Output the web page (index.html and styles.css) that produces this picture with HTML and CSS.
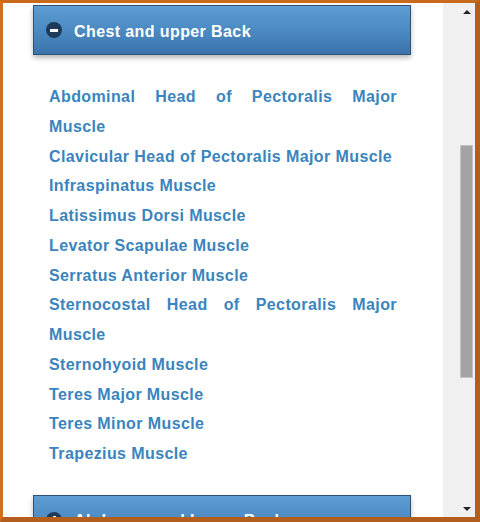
FILE: index.html
```html
<!DOCTYPE html>
<html>
<head>
<meta charset="utf-8">
<link rel="stylesheet" href="styles.css">
</head>
<body>
<div class="frame">
  <div class="content">
    <div class="panel-head">
      <span class="toggle"><span class="bar"></span></span>
      <span class="title">Chest and upper Back</span>
    </div>
    <div class="list">
      <a class="item">Abdominal Head of Pectoralis Major Muscle</a>
      <a class="item">Clavicular Head of Pectoralis Major Muscle</a>
      <a class="item">Infraspinatus Muscle</a>
      <a class="item">Latissimus Dorsi Muscle</a>
      <a class="item">Levator Scapulae Muscle</a>
      <a class="item">Serratus Anterior Muscle</a>
      <a class="item">Sternocostal Head of Pectoralis Major Muscle</a>
      <a class="item">Sternohyoid Muscle</a>
      <a class="item">Teres Major Muscle</a>
      <a class="item">Teres Minor Muscle</a>
      <a class="item">Trapezius Muscle</a>
    </div>
    <div class="panel-head">
      <span class="toggle"><span class="bar"></span><span class="bar vert"></span></span>
      <span class="title">Abdomen and Lower Back</span>
    </div>
  </div>
  <div class="side">
    <div class="gutter"></div>
    <div class="track">
      <div class="btn"><span class="arrow-up"></span></div>
      <div class="thumb"></div>
      <div class="spacer"></div>
      <div class="btn"><span class="arrow-down"></span></div>
    </div>
  </div>
</div>
</body>
</html>
```

FILE: styles.css
```css
html, body {
  margin: 0;
  padding: 0;
  background: #ffffff;
}

.frame {
  width: 480px;
  height: 522px;
  box-sizing: border-box;
  border-style: solid;
  border-width: 3px 5px 5px 3px;
  border-color: #c8691c #b35e1c #b35e1c #d0701f;
  display: flex;
  background: #ffffff;
  overflow: hidden;
}

.content {
  flex: 1;
  overflow: hidden;
  padding: 2px 0 0 30px;
  font-family: "Liberation Sans", Arial, sans-serif;
  font-weight: bold;
  font-size: 16px;
  letter-spacing: 0.4px;
}

.panel-head {
  width: 378px;
  height: 50px;
  box-sizing: border-box;
  border: 1px solid #2e5379;
  background: linear-gradient(to bottom, #5e9dd2 0%, #4d8cc4 45%, #3c74ab 100%);
  box-shadow: 0 3px 5px rgba(0, 0, 0, 0.28);
  display: flex;
  align-items: center;
  padding-left: 12px;
}

.toggle {
  position: relative;
  width: 16px;
  height: 16px;
  border-radius: 50%;
  background: #1d3b5b;
  display: flex;
  align-items: center;
  justify-content: center;
  margin-right: 12px;
  flex: none;
}

.bar {
  width: 8px;
  height: 3px;
  background: #ffffff;
}

.bar.vert {
  position: absolute;
  width: 3px;
  height: 8px;
  left: 6.5px;
  top: 4px;
}

.title {
  color: #ffffff;
  padding-top: 3px;
}

.list {
  width: 378px;
  box-sizing: border-box;
  padding: 27px 14px 26px 16px;
}

.item {
  display: block;
  color: #3b84bd;
  text-align: justify;
  line-height: 29.75px;
}

.side {
  width: 32px;
  display: flex;
  background: #f0f0f0;
}

.gutter {
  width: 16px;
}

.track {
  width: 16px;
  display: flex;
  flex-direction: column;
}

.btn {
  height: 17px;
  display: flex;
  align-items: center;
  justify-content: center;
  flex: none;
}

.arrow-up {
  width: 0;
  height: 0;
  border-left: 4px solid transparent;
  border-right: 4px solid transparent;
  border-bottom: 4px solid #222;
}

.arrow-down {
  width: 0;
  height: 0;
  border-left: 4px solid transparent;
  border-right: 4px solid transparent;
  border-top: 4px solid #222;
}

.thumb {
  margin: 125px 2px 0 1px;
  height: 233px;
  box-sizing: border-box;
  background: #a3a3a3;
  border: 1px solid #c4c4c4;
  flex: none;
}

.spacer {
  flex: 1;
}
```
